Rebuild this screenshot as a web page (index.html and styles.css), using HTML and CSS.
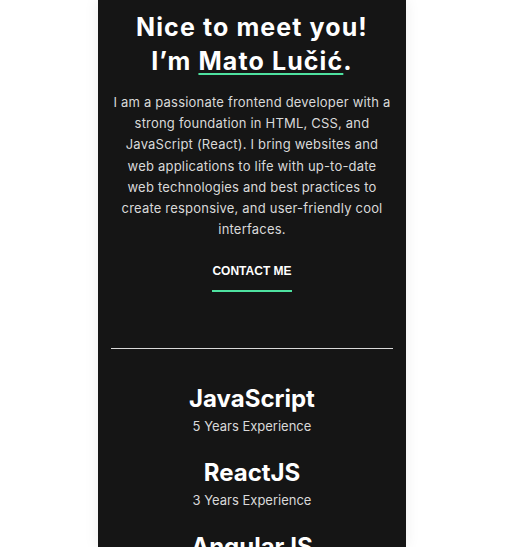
FILE: index.html
```html
<!DOCTYPE html>
<html lang="en">
<head>
<meta charset="utf-8">
<title>Mato Lučić</title>
<link rel="stylesheet" href="styles.css">
</head>
<body>
<main class="panel">
  <section class="hero">
    <h1 class="hero-title">Nice to meet you!<br>I’m <span class="name">Mato Lučić</span>.</h1>
    <p class="hero-text">I am a passionate frontend developer with a strong foundation in HTML, CSS, and JavaScript (React). I bring websites and web applications to life with up-to-date web technologies and best practices to create responsive, and user-friendly cool interfaces.</p>
    <a class="contact" href="#contact">CONTACT ME</a>
  </section>
  <hr class="divider">
  <ul class="skills">
    <li class="skill"><h3 class="skill-name">JavaScript</h3><p class="skill-exp">5 Years Experience</p></li>
    <li class="skill"><h3 class="skill-name">ReactJS</h3><p class="skill-exp">3 Years Experience</p></li>
    <li class="skill"><h3 class="skill-name">AngularJS</h3><p class="skill-exp">2 Years Experience</p></li>
  </ul>
</main>
</body>
</html>
```
FILE: styles.css
```css
* { box-sizing: border-box; }
html, body { margin: 0; padding: 0; background: #ffffff; }
body { font-family: Inter, "Noto Sans", sans-serif; }

.panel {
  width: 308px;
  height: 547px;
  margin: 0 0 0 98px;
  background: #151515;
  overflow: hidden;
  box-shadow: 0 0 14px rgba(0, 0, 0, 0.08);
  padding: 10px 13px 0 13px;
  color: #ffffff;
}

.hero { display: flex; flex-direction: column; align-items: center; text-align: center; }

.hero-title {
  margin: 0;
  font-size: 25px;
  line-height: 34px;
  font-weight: 700;
  letter-spacing: 1.1px;
}
.name {
  text-decoration: underline;
  text-decoration-color: #4ee1a0;
  text-decoration-thickness: 2px;
  text-underline-offset: 3px;
}

.hero-text {
  margin: 14px 0 0 0;
  max-width: 278px;
  font-size: 13px;
  line-height: 21.2px;
  letter-spacing: 0.2px;
  color: #d9d9d9;
}

.contact {
  margin-top: 24px;
  font-family: "Liberation Sans", Arial, sans-serif;
  font-size: 12px;
  line-height: 14px;
  font-weight: 700;
  color: #ffffff;
  text-decoration: none;
  padding-bottom: 12px;
  border-bottom: 2px solid #4ee1a0;
}

.divider {
  margin: 56px 0 0 0;
  border: 0;
  height: 1px;
  background: #d9d9d9;
}

.skills {
  list-style: none;
  margin: 35px 0 0 0;
  padding: 0;
  display: flex;
  flex-direction: column;
  gap: 20px;
  text-align: center;
}
.skill-name {
  margin: 0;
  font-size: 24px;
  line-height: 30px;
  font-weight: 700;
  letter-spacing: 0;
}
.skill-exp {
  margin: 0;
  font-size: 13px;
  line-height: 24px;
  color: #d9d9d9;
}
```
